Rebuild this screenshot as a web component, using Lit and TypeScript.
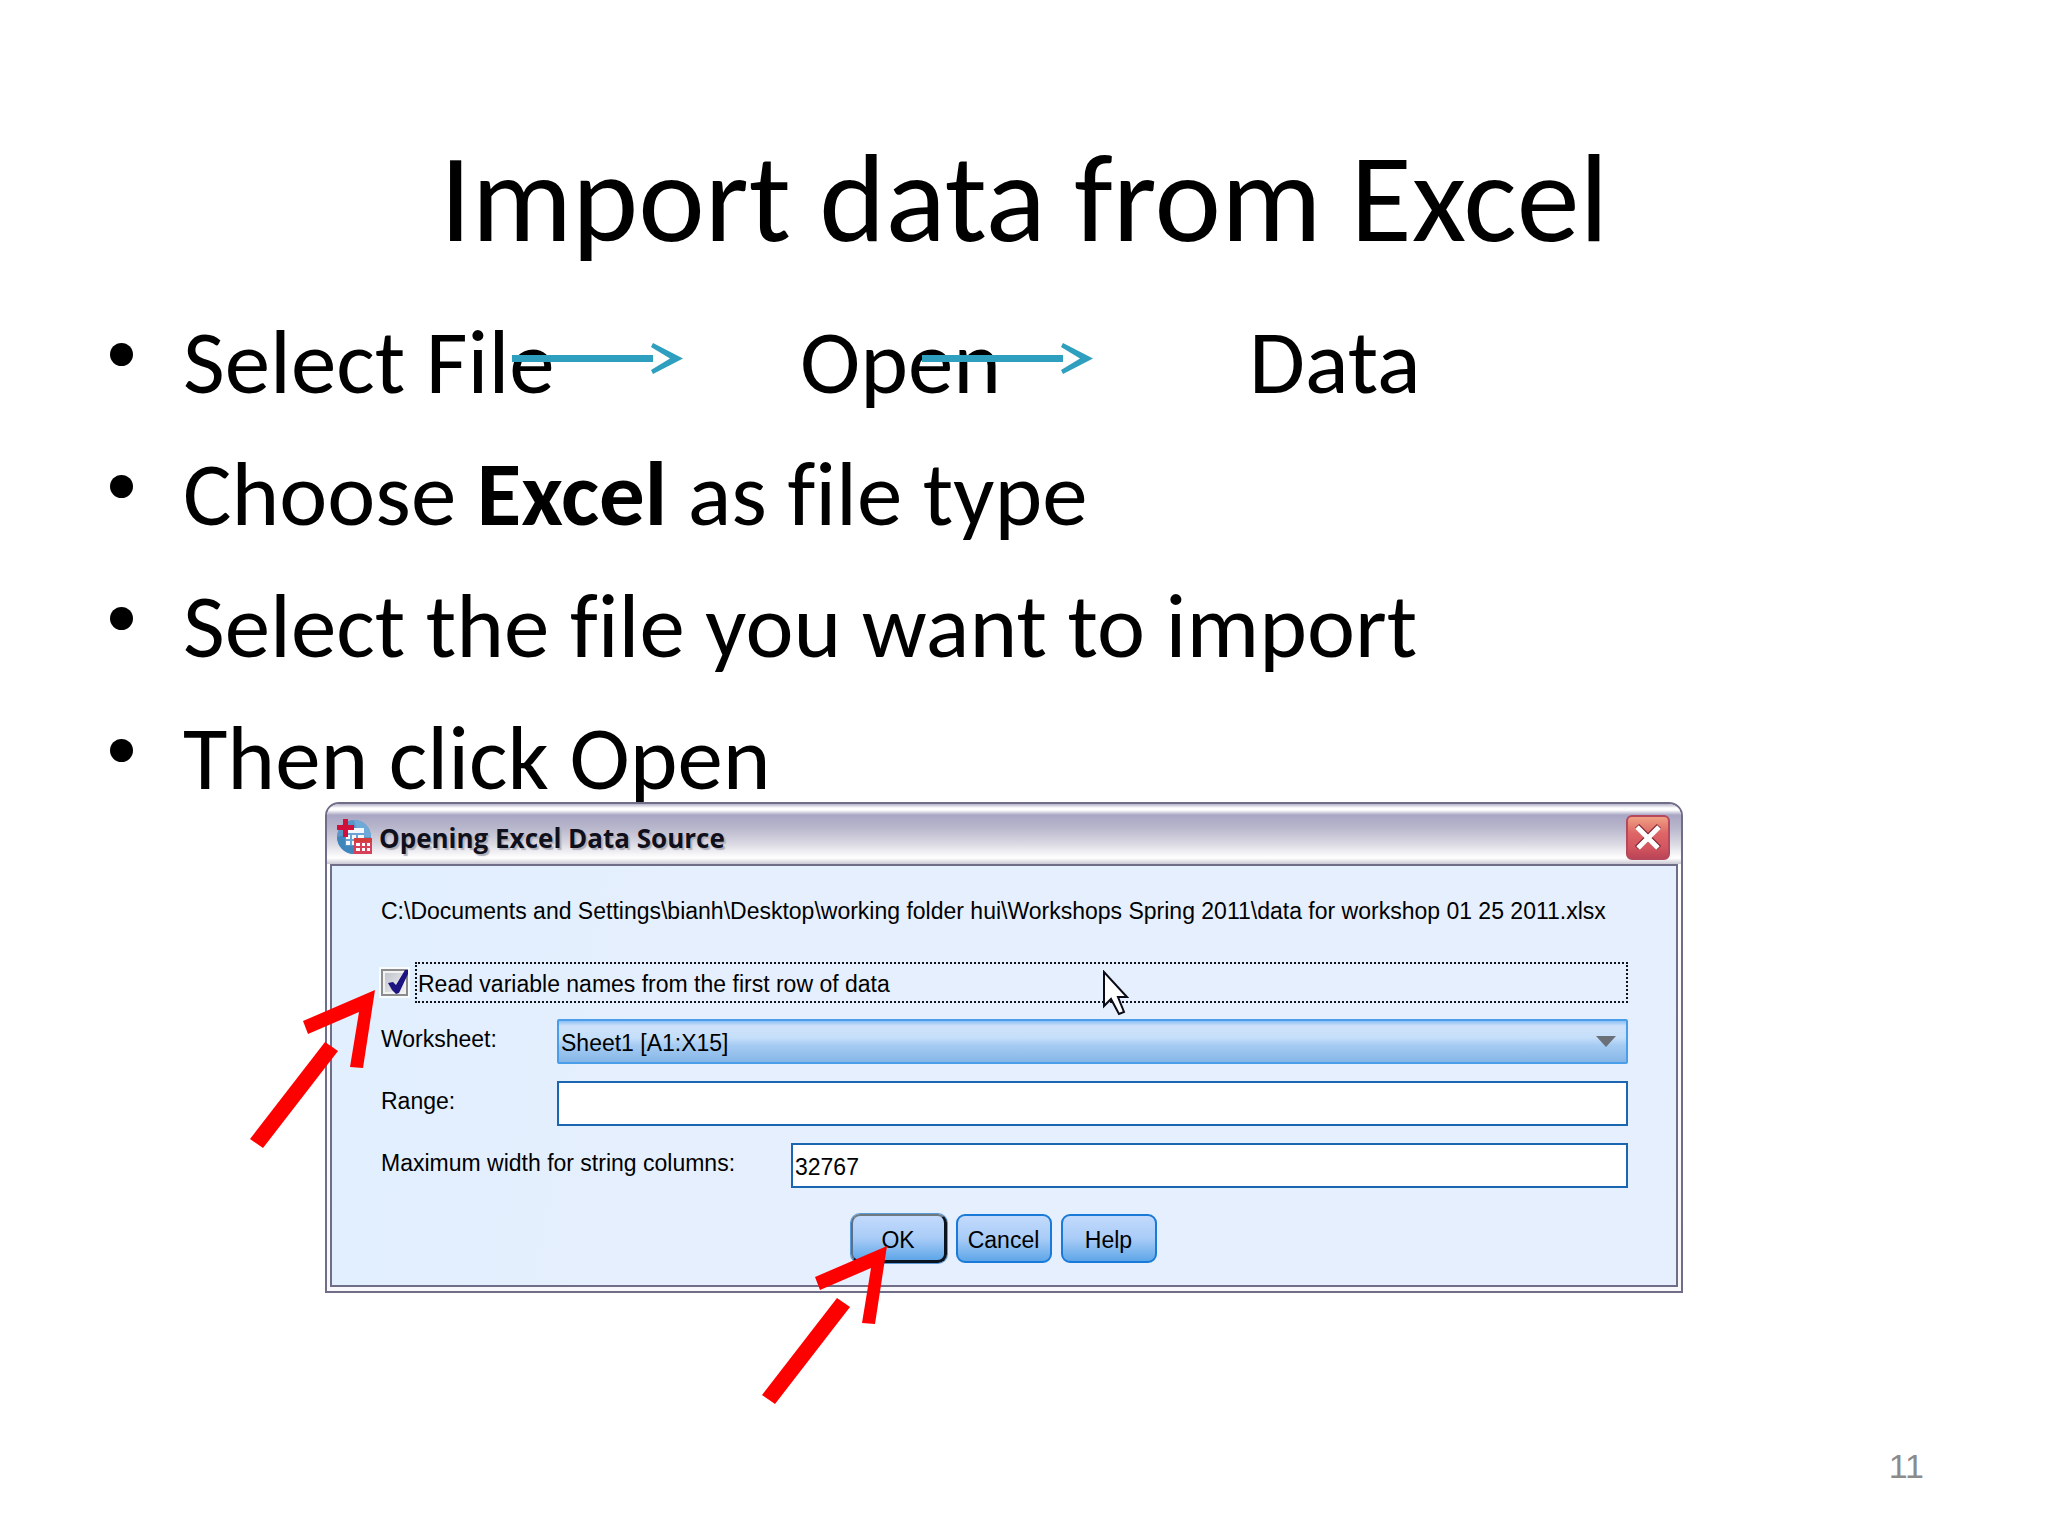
import { LitElement, html, css, svg } from "lit";
import { customElement } from "lit/decorators.js";

/* Slim teal connector drawn between two menu steps. */
const connector = html`
  <svg class="connector" width="172" height="32" viewBox="0 0 172 32" aria-hidden="true">
    <path d="M0 12H141V19H0Z" fill="#2e9fbe" />
    <path d="M141 0L171 15.500L141 31L139 27L158 15.500L139 4Z" fill="#2e9fbe" />
  </svg>
`;

const pointerShape = svg`
  <path d="M0 149L13 158L88 61L75 52Z" fill="#ff0000" />
  <path d="M125 0L53 31L58 44L109 22L100 77L113 78Z" fill="#ff0000" />
`;

@customElement("excel-dialog")
export class ExcelDialog extends LitElement {
  static styles = css`
    :host {
      display: block;
      position: relative;
      font-family: "Liberation Sans", Arial, sans-serif;
      font-size: 23px;
      line-height: 28px;
      color: #000;
    }
    .window {
      border: 2px solid #706d88;
      border-radius: 14px 14px 0 0;
      padding: 0 3px 4px;
      background: linear-gradient(#ffffff, #f8f8fb);
      overflow: hidden;
    }
    .titlebar {
      display: flex;
      align-items: center;
      gap: 7px;
      height: 60px;
      margin: 0 -3px;
      padding: 6px 11px 0 9px;
      box-sizing: border-box;
      background: linear-gradient(#b5b3c8 0, #ffffff 4px, #ffffff 6px, #a9a6c4 11px, #b9b7cc 24px, #d6d5e0 38px, #ffffff 54px, #c9c8d4 60px);
    }
    .title {
      flex: 1;
      margin: 0;
      padding-top: 2px;
      font: bold 26px/34px "Open Sans", "Noto Sans", sans-serif;
      color: #10101c;
      text-shadow: 2px 2px 1px #b0b0bc;
    }
    .close {
      display: block;
      width: 44px;
      height: 45px;
      padding: 0;
      border: 2px solid #b5485c;
      border-radius: 6px;
      background: linear-gradient(#efa184, #de6565 40%, #d25560 75%, #bb4455);
    }
    .close svg {
      display: block;
      margin: auto;
    }
    .client {
      border: 2px solid #706d88;
      padding: 31px 48px 22px 49px;
      background: linear-gradient(100deg, #e1efff, #e6effd 30%, #e5effd);
    }
    .path {
      margin: 0 0 37px;
      white-space: nowrap;
    }
    .check {
      display: flex;
      align-items: center;
      gap: 7px;
      margin-bottom: 16px;
    }
    .box {
      appearance: none;
      flex: none;
      width: 27px;
      height: 27px;
      margin: 0;
      border: 2px solid #8c8c8c;
      outline: 2px solid #f8fbff;
      background: linear-gradient(135deg, #bcc0c8, #f4f4f4);
      box-shadow: inset 0 0 0 2px #f2f2f2;
    }
    .tickwrap {
      position: relative;
      display: flex;
    }
    .tick {
      position: absolute;
      left: 6px;
      top: 0;
      pointer-events: none;
    }
    .checklabel {
      flex: 1;
      border: 2px dotted #101018;
      padding: 7px 1px 3px;
      line-height: 27px;
    }
    .row {
      display: grid;
      grid-template-columns: 176px 1fr;
      margin-bottom: 17px;
    }
    .row.wide {
      grid-template-columns: 410px 1fr;
      margin-bottom: 26px;
    }
    .row label {
      padding-top: 6px;
    }
    .field {
      width: 100%;
      height: 45px;
      box-sizing: border-box;
      margin: 0;
      padding: 3px 2px 0;
      border: 2px solid #1a66b0;
      border-radius: 0;
      background: #fff;
      color: #000;
      font: inherit;
    }
    .selectwrap {
      position: relative;
      display: flex;
    }
    .select {
      appearance: none;
      border: 2px solid #4a9de8;
      border-radius: 2px;
      background: linear-gradient(#8dc0f4 0, #cfe1fa 5px, #c6dff9 40%, #a5cbf2 60%, #86b7e8);
    }
    .caret {
      position: absolute;
      right: 12px;
      top: 17px;
      pointer-events: none;
    }
    .actions {
      display: flex;
      justify-content: center;
      gap: 9px;
      padding-right: 2px;
    }
    .button {
      width: 96px;
      height: 49px;
      padding: 3px 0 0;
      border: 2px solid #1a7ad8;
      border-radius: 9px;
      background: linear-gradient(#c3dafc, #a9ccf7 50%, #5ea6e8);
      color: #000;
      font: inherit;
    }
    .primary {
      border-color: #6f7a80 #0a1420 #0a1420 #5a7088;
      border-right-width: 3px;
      border-bottom-width: 3px;
      box-shadow: 0 0 0 1px #5a9ad8;
    }
    .cursor {
      position: absolute;
      left: 777px;
      top: 168px;
      pointer-events: none;
    }
    .pointer {
      position: absolute;
      pointer-events: none;
    }
    .to-check {
      left: -75px;
      top: 188px;
    }
    .to-ok {
      left: 437px;
      top: 444px;
    }
  `;

  render() {
    return html`
      <section class="window" aria-labelledby="caption">
        <header class="titlebar">
          <svg width="36" height="36" viewBox="0 0 36 36" aria-hidden="true">
            <circle cx="18" cy="18" r="17" fill="#5b94c6" />
            <path d="M18 1A17 17 0 0 1 35 18H29L20 8Z" fill="#6fa9d8" />
            <path d="M1 18A17 17 0 0 0 18 35V27H9V16Z" fill="#3f86bd" />
            <path d="M10 9H28V26H10Z" fill="#f4f8fc" />
            <path d="M10 15H28M10 21H28M15 14V26M21 14V26" stroke="#6aa2d6" stroke-width="2" />
            <path d="M7 0H12V6H18V11H12V18H7V11H1V6H7Z" fill="#d0103a" />
            <path d="M18 19H36V35H18Z" fill="#d8405a" />
            <path d="M18 19H36V23H18Z" fill="#d43c3c" />
            <path d="M20 24H24V27H20ZM26 24H29V27H26ZM31 24H34V27H31ZM20 29H24V32H20ZM26 29H29V32H26ZM31 29H34V32H31Z" fill="#fff" />
          </svg>
          <h2 class="title" id="caption">Opening Excel Data Source</h2>
          <button class="close" type="button" aria-label="Close">
            <svg width="28" height="28" viewBox="0 0 28 28" aria-hidden="true">
              <path d="M3 3L25 25M25 3L3 25" stroke="#7c2030" stroke-width="6" />
              <path d="M3 4L24 25M25 4L4 25" stroke="#fff" stroke-width="5" />
            </svg>
          </button>
        </header>
        <form class="client">
          <p class="path">C:\\Documents and Settings\\bianh\\Desktop\\working folder hui\\Workshops Spring 2011\\data for workshop 01 25 2011.xlsx</p>
          <div class="check">
            <span class="tickwrap">
              <input class="box" id="names" type="checkbox" checked />
              <svg class="tick" width="22" height="27" viewBox="0 0 22 27" aria-hidden="true">
                <path d="M1 14L6 13L9 16L18 1H21V5L12 24L9 25L5 21Z" fill="#1c1480" />
              </svg>
            </span>
            <label class="checklabel" for="names">Read variable names from the first row of data</label>
          </div>
          <div class="row">
            <label for="sheet">Worksheet:</label>
            <span class="selectwrap">
              <select class="field select" id="sheet">
                <option>Sheet1 [A1:X15]</option>
              </select>
              <svg class="caret" width="20" height="11" viewBox="0 0 20 11" aria-hidden="true">
                <path d="M0 0H20L10 11Z" fill="#6a6f78" />
              </svg>
            </span>
          </div>
          <div class="row">
            <label for="range">Range:</label>
            <input class="field" id="range" type="text" />
          </div>
          <div class="row wide">
            <label for="width">Maximum width for string columns:</label>
            <input class="field" id="width" type="text" value="32767" />
          </div>
          <div class="actions">
            <button class="button primary" type="button">OK</button>
            <button class="button" type="button">Cancel</button>
            <button class="button" type="button">Help</button>
          </div>
        </form>
      </section>
      <svg class="cursor" width="28" height="46" viewBox="0 0 28 46" aria-hidden="true">
        <path d="M2 2V36L9 29L17 44L22 42L16 27H25Z" fill="#fff" stroke="#0a0a18" stroke-width="2" />
      </svg>
      <svg class="pointer to-check" width="126" height="158" viewBox="0 0 126 158" aria-hidden="true">${pointerShape}</svg>
      <svg class="pointer to-ok" width="126" height="158" viewBox="0 0 126 158" aria-hidden="true">${pointerShape}</svg>
    `;
  }
}

@customElement("app-root")
export class AppRoot extends LitElement {
  static styles = css`
    :host {
      display: block;
      background: #fff;
      color: #000;
      font-family: Carlito, Calibri, Lato, sans-serif;
    }
    .slide {
      display: flex;
      flex-direction: column;
      min-height: 100vh;
      box-sizing: border-box;
      padding: 132px 0 50px;
    }
    .heading {
      margin: 0 0 52px;
      font-size: 126px;
      line-height: 132px;
      font-weight: 400;
      text-align: center;
    }
    .points {
      display: flex;
      flex-direction: column;
      gap: 40px;
      margin: 0 0 -2px;
      padding: 0 110px;
      list-style: none;
      font-size: 91px;
      line-height: 92px;
      font-variant-ligatures: none;
    }
    .point {
      display: flex;
    }
    .point::before {
      content: "";
      flex: none;
      width: 23px;
      height: 23px;
      margin: 27px 50px 0 0;
      border-radius: 50%;
      background: #000;
    }
    .steps {
      display: grid;
      grid-template-columns: 617px 449px auto;
    }
    .step {
      position: relative;
    }
    .connector {
      position: absolute;
      top: 27px;
    }
    .first .connector {
      left: 329px;
    }
    .second .connector {
      left: 122px;
    }
    .dialog {
      margin: 0 365px 0 325px;
    }
    .footer {
      margin-top: auto;
      padding: 0 124px;
      text-align: right;
      font: 34px/40px "Liberation Sans", Arial, sans-serif;
      color: #8b8b8b;
    }
  `;

  render() {
    return html`
      <main class="slide">
        <h1 class="heading">Import data from Excel</h1>
        <ul class="points">
          <li class="point">
            <span class="steps">
              <span class="step first">Select File${connector}</span>
              <span class="step second">Open${connector}</span>
              <span class="step">Data</span>
            </span>
          </li>
          <li class="point"><span>Choose <b>Excel</b> as file type</span></li>
          <li class="point"><span>Select the file you want to import</span></li>
          <li class="point"><span>Then click Open</span></li>
        </ul>
        <excel-dialog class="dialog"></excel-dialog>
        <footer class="footer">11</footer>
      </main>
    `;
  }
}
